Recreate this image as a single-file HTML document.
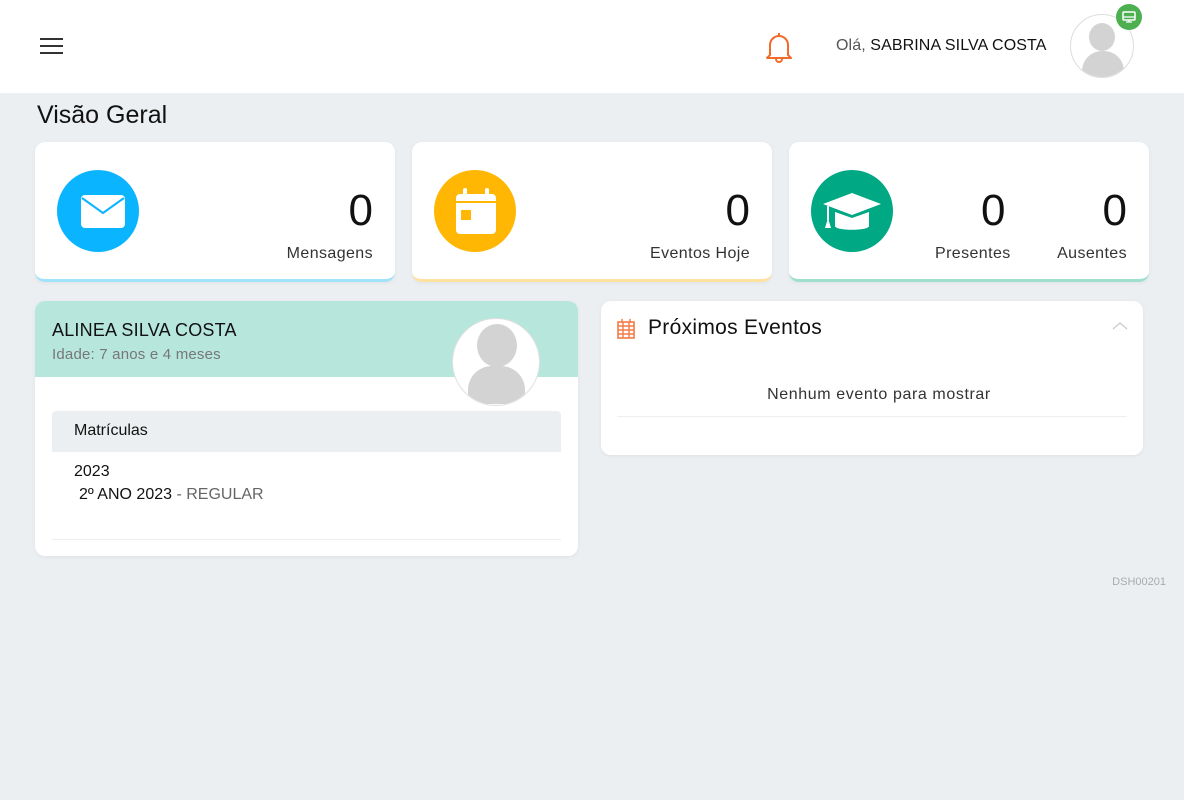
<!DOCTYPE html>
<html><head><meta charset="utf-8"><style>
*{box-sizing:border-box;margin:0;padding:0}
body{width:1184px;height:800px;background:#ECEFF2;font-family:"Liberation Sans",sans-serif;position:relative;overflow:hidden;color:#111}
.abs{position:absolute}
.hdr{left:0;top:0;width:1184px;height:93px;background:#fff}
.card{background:#fff;border-radius:10px;box-shadow:0 1px 4px rgba(0,0,0,.06)}
.stat{top:142px;height:140px;width:360px}
.circ{position:absolute;left:22px;top:28px;width:82px;height:82px;border-radius:50%}
.num{position:absolute;font-size:44px;color:#111;top:45px;line-height:48px;font-weight:300}
.lbl{position:absolute;font-size:16px;color:#333;letter-spacing:.4px}
</style></head><body>
<div class="abs hdr"></div>
<div class="abs" style="left:40px;top:38px;width:23px;height:2px;background:#333"></div>
<div class="abs" style="left:40px;top:45px;width:23px;height:2px;background:#333"></div>
<div class="abs" style="left:40px;top:52px;width:23px;height:2px;background:#333"></div>
<svg class="abs" style="left:764px;top:30px" width="30" height="34" viewBox="0 0 30 34"><path d="M15 3v3M6 25V15a9 9 0 0 1 18 0v10l3 3H3z M12 29a3 3 0 0 0 6 0" fill="none" stroke="#F26B2A" stroke-width="2" stroke-linejoin="round"/></svg>
<div class="abs" style="left:836px;top:37px;font-size:16px;color:#555;letter-spacing:.1px">Olá, <span style="color:#111">SABRINA SILVA COSTA</span></div>
<div class="abs" style="left:1070px;top:14px;width:64px;height:64px;border-radius:50%;border:1px solid #ddd;background:#fff;overflow:hidden">
<div class="abs" style="left:18px;top:8px;width:26px;height:28px;border-radius:50%;background:#d3d3d3"></div>
<div class="abs" style="left:11px;top:36px;width:42px;height:30px;border-radius:20px 20px 4px 4px;background:#d3d3d3"></div></div>
<div class="abs" style="left:1116px;top:4px;width:26px;height:26px;border-radius:50%;background:#4CAF50"></div>
<svg class="abs" style="left:1121px;top:9px" width="16" height="16" viewBox="0 0 16 16"><rect x="2" y="3" width="12" height="8" rx="1" fill="none" stroke="#fff" stroke-width="1.5"/><path d="M5 13h6M8 11v2M2 8h12" stroke="#fff" stroke-width="1.3"/></svg>
<div class="abs" style="left:37px;top:101px;font-size:25px;color:#111">Visão Geral</div>

<div class="abs card stat" style="left:35px;border-bottom:3px solid #A1E3FB">
<div class="circ" style="background:#0BB4FF"></div>
<svg class="abs" style="left:44px;top:50px" width="48" height="38" viewBox="0 0 48 38"><rect x="2" y="3" width="44" height="33" rx="4" fill="#fff"/><path d="M3 6l21 15 21-15" fill="none" stroke="#0BB4FF" stroke-width="2"/></svg>
<div class="num" style="right:22px">0</div>
<div class="lbl" style="right:22px;top:103px">Mensagens</div></div>

<div class="abs card stat" style="left:412px;border-bottom:3px solid #FFE1A0">
<div class="circ" style="background:#FFB703"></div>
<svg class="abs" style="left:42px;top:46px" width="44" height="48" viewBox="0 0 44 48"><rect x="2" y="6" width="40" height="40" rx="4" fill="#fff"/><rect x="9" y="0" width="4" height="10" rx="2" fill="#fff"/><rect x="31" y="0" width="4" height="10" rx="2" fill="#fff"/><path d="M2 14h40" stroke="#FFB703" stroke-width="2"/><rect x="7" y="22" width="10" height="10" fill="#FFB703"/></svg>
<div class="num" style="right:22px">0</div>
<div class="lbl" style="right:22px;top:103px">Eventos Hoje</div></div>

<div class="abs card stat" style="left:789px;border-bottom:3px solid #9EE0CD">
<div class="circ" style="background:#00A884"></div>
<svg class="abs" style="left:32px;top:48px" width="62" height="46" viewBox="0 0 62 46"><path d="M2 14L31 3l29 11-29 11z" fill="#fff"/><path d="M14 22v14c0 5 34 5 34 0V22l-17 6z" fill="#fff"/><path d="M7 16v14" stroke="#fff" stroke-width="2"/><path d="M4 38l3-10 3 10z" fill="#fff"/></svg>
<div class="num" style="left:192px">0</div>
<div class="num" style="right:22px">0</div>
<div class="lbl" style="left:146px;top:103px">Presentes</div>
<div class="lbl" style="right:22px;top:103px">Ausentes</div></div>

<div class="abs card" style="left:35px;top:301px;width:543px;height:255px;overflow:hidden">
<div class="abs" style="left:0;top:0;width:543px;height:76px;background:#B7E6DC"></div>
<div class="abs" style="left:17px;top:19px;font-size:18px;color:#111;letter-spacing:.2px">ALINEA SILVA COSTA</div>
<div class="abs" style="left:17px;top:45px;font-size:15px;color:#777;letter-spacing:.2px">Idade: 7 anos e 4 meses</div>
<div class="abs" style="left:17px;top:110px;width:509px;height:41px;background:#ECEFF2;border-radius:4px 4px 0 0"></div>
<div class="abs" style="left:39px;top:121px;font-size:16px">Matrículas</div>
<div class="abs" style="left:39px;top:162px;font-size:16px">2023</div>
<div class="abs" style="left:44px;top:185px;font-size:16px">2º ANO 2023 <span style="color:#666">- REGULAR</span></div>
<div class="abs" style="left:17px;top:238px;width:509px;height:1px;background:#eceff2"></div>
</div>
<div class="abs" style="left:452px;top:318px;width:88px;height:88px;border-radius:50%;background:#fff;border:1px solid #e0e0e0;overflow:hidden">
<div class="abs" style="left:24px;top:5px;width:40px;height:43px;border-radius:50%;background:#d3d3d3"></div>
<div class="abs" style="left:15px;top:47px;width:57px;height:38px;border-radius:24px 24px 6px 6px;background:#d3d3d3"></div></div>

<div class="abs card" style="left:601px;top:301px;width:542px;height:154px">
<svg class="abs" style="left:16px;top:18px" width="18" height="20" viewBox="0 0 18 20"><rect x="1" y="3" width="16" height="16" fill="none" stroke="#F47A45" stroke-width="1.6"/><path d="M1 7h16M1 11h16M1 15h16M6 3v16M12 3v16M5 0v4M13 0v4" stroke="#F47A45" stroke-width="1.4"/></svg>
<div class="abs" style="left:47px;top:15px;font-size:21px;color:#111;letter-spacing:.3px">Próximos Eventos</div>
<svg class="abs" style="left:511px;top:20px" width="16" height="10"><path d="M1 8l7-6 7 6" fill="none" stroke="#ccc" stroke-width="1.3"/></svg>
<div class="abs" style="left:0;width:556px;top:85px;text-align:center;font-size:16px;color:#333;letter-spacing:.6px">Nenhum evento para mostrar</div>
<div class="abs" style="left:16px;top:115px;width:510px;height:1px;background:#eceff2"></div>
</div>
<div class="abs" style="right:18px;top:576px;font-size:11px;color:#aaa">DSH00201</div>
</body></html>
